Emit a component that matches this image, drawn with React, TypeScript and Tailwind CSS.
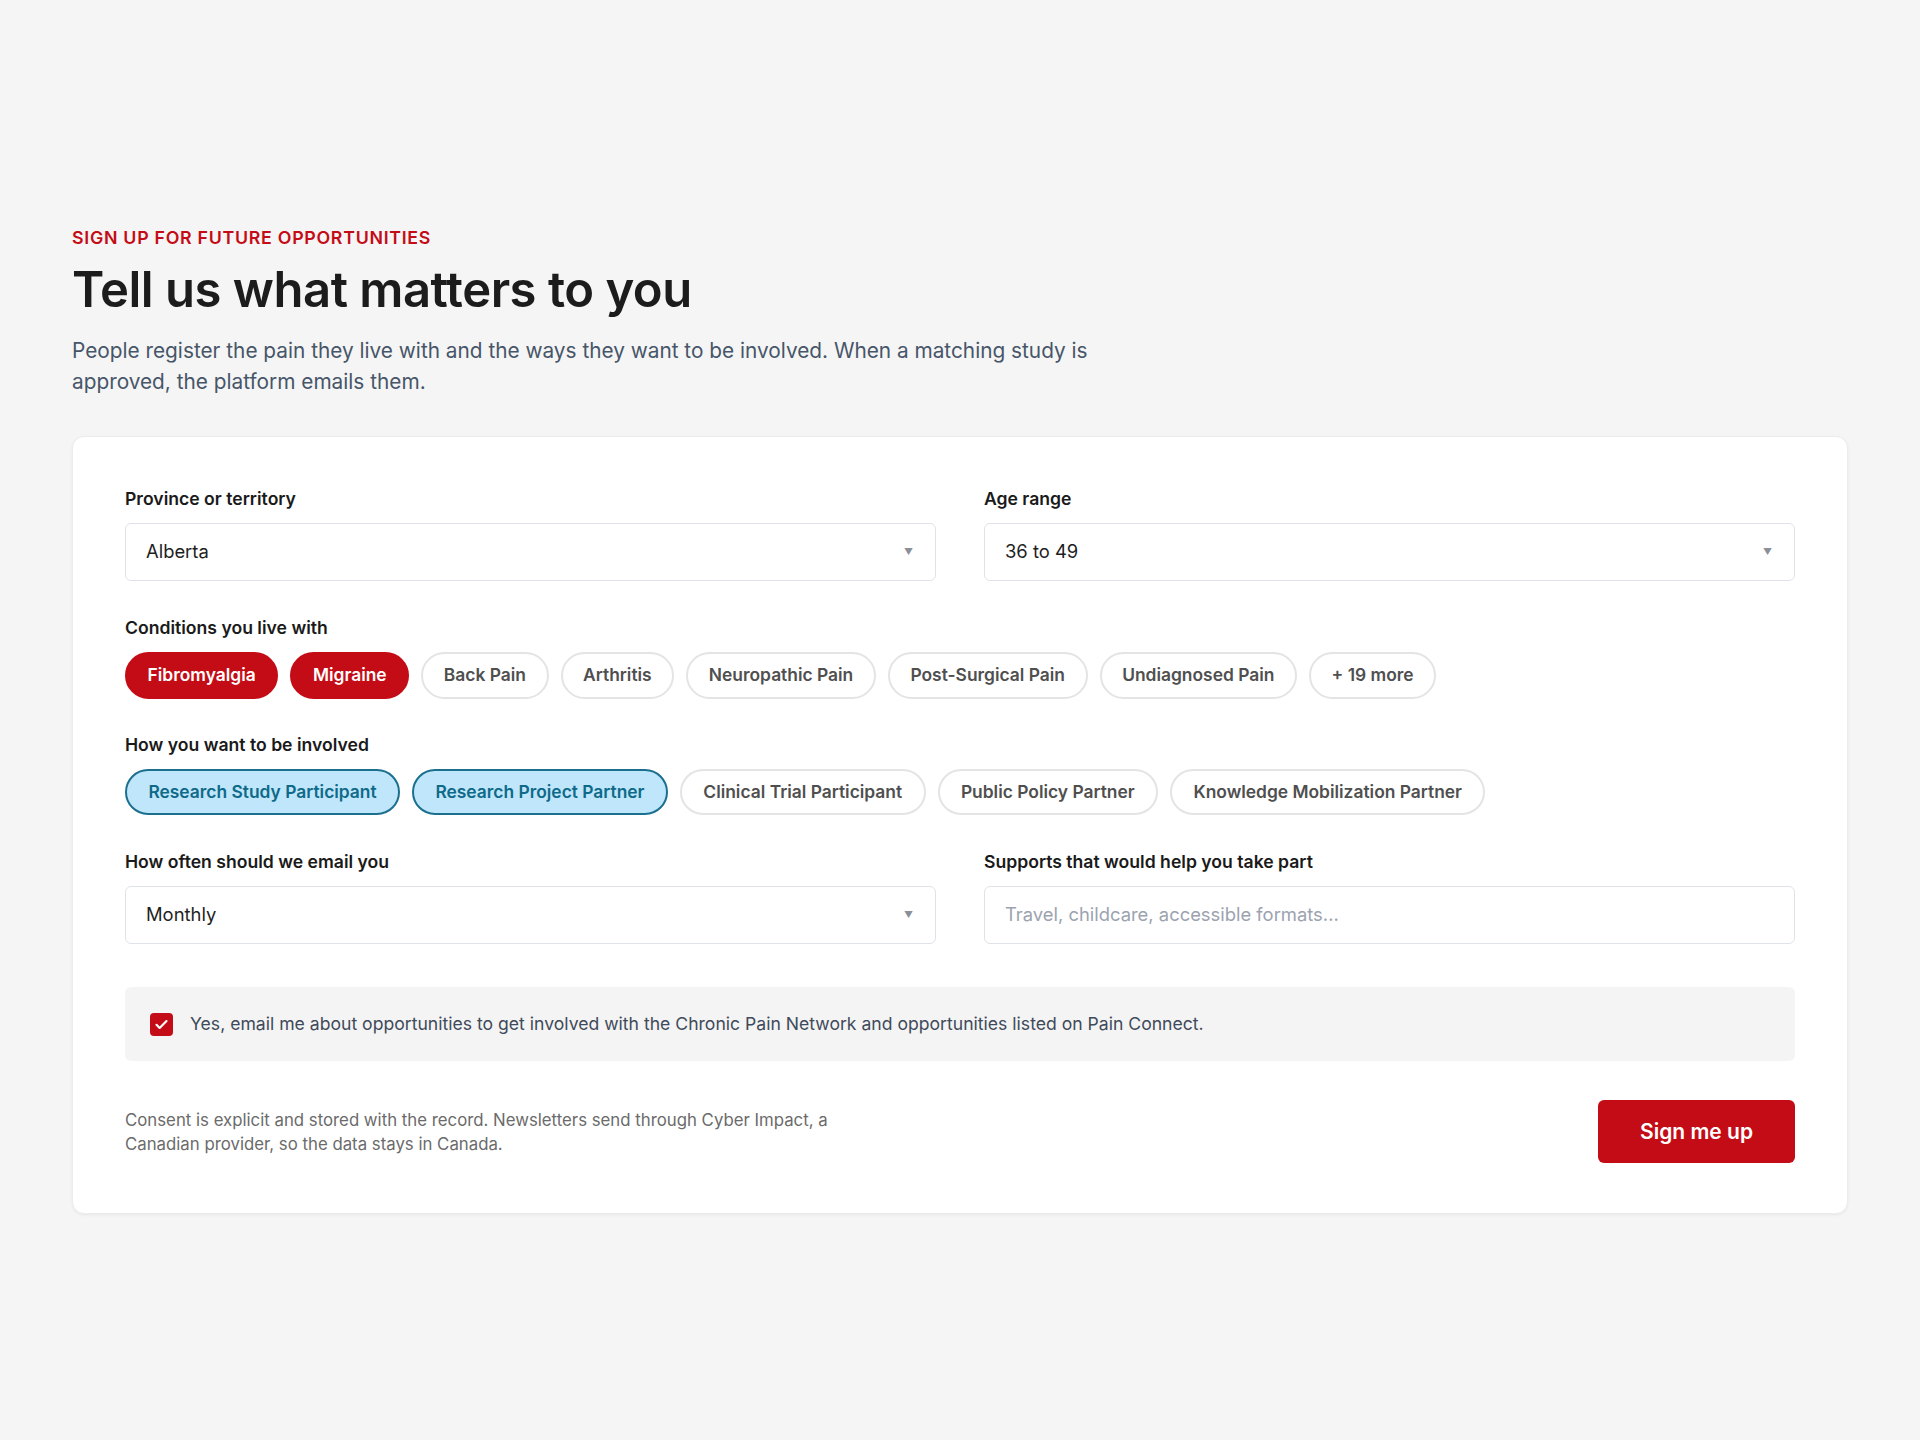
import React, { useState } from 'react';

const conditions = [
  'Fibromyalgia',
  'Migraine',
  'Back Pain',
  'Arthritis',
  'Neuropathic Pain',
  'Post-Surgical Pain',
  'Undiagnosed Pain',
  '+ 19 more',
];

const involvement = [
  'Research Study Participant',
  'Research Project Partner',
  'Clinical Trial Participant',
  'Public Policy Partner',
  'Knowledge Mobilization Partner',
];

const Label: React.FC<{ children: React.ReactNode }> = ({ children }) => (
  <div className="text-[17.6px] leading-6 font-semibold text-[#1a1a1a] mb-3">{children}</div>
);

const SelectBox: React.FC<{ value: string }> = ({ value }) => (
  <div className="h-[58px] w-full flex items-center justify-between rounded-md border border-[#dfe3e8] bg-white pl-5 pr-[22px]">
    <span className="text-[18.4px] text-[#1f1f1f]">{value}</span>
    <span className="text-[9px] text-[#8a8f98]">▼</span>
  </div>
);

const App: React.FC = () => {
  const [selectedConditions] = useState(['Fibromyalgia', 'Migraine']);
  const [selectedRoles] = useState(['Research Study Participant', 'Research Project Partner']);

  return (
    <div className="min-h-[1440px] bg-[#f5f5f5] px-[72px] pt-[226px]" style={{ fontFamily: 'Inter, "Noto Sans", sans-serif' }}>
      {/* Header */}
      <div className="text-[17.8px] leading-6 font-semibold tracking-[0.04em] text-[#c40c16]">
        SIGN UP FOR FUTURE OPPORTUNITIES
      </div>
      <h1 className="mt-[12px] text-[49px] leading-[56px] font-semibold tracking-[-0.01em] text-[#1c1c1c]">
        Tell us what matters to you
      </h1>
      <p className="mt-[17px] max-w-[1060px] text-[20.8px] leading-[31px] text-[#475569]">
        People register the pain they live with and the ways they want to be involved. When a matching study is
        approved, the platform emails them.
      </p>

      {/* Card */}
      <div className="mt-[39px] rounded-xl bg-white p-[52px] pt-[50px] pb-[50px] shadow-[0_1px_3px_rgba(0,0,0,0.06)] border border-[#ececec]">
        <div className="grid grid-cols-2 gap-x-12">
          <div>
            <Label>Province or territory</Label>
            <SelectBox value="Alberta" />
          </div>
          <div>
            <Label>Age range</Label>
            <SelectBox value="36 to 49" />
          </div>
        </div>

        <div className="mt-[35px]">
          <Label>Conditions you live with</Label>
          <div className="flex flex-wrap gap-3">
            {conditions.map((c) => {
              const on = selectedConditions.includes(c);
              return (
                <span
                  key={c}
                  className={
                    on
                      ? 'h-[47px] px-[20.6px] flex items-center rounded-full border-2 border-[#c40c16] bg-[#c40c16] text-[17.4px] font-semibold text-white'
                      : 'h-[47px] px-[20.6px] flex items-center rounded-full border-2 border-[#e4e4e4] bg-white text-[17.4px] font-semibold text-[#4f4f4f]'
                  }
                >
                  {c}
                </span>
              );
            })}
          </div>
        </div>

        <div className="mt-[34px]">
          <Label>How you want to be involved</Label>
          <div className="flex flex-wrap gap-3">
            {involvement.map((r) => {
              const on = selectedRoles.includes(r);
              return (
                <span
                  key={r}
                  className={
                    on
                      ? 'h-[46px] px-[21.4px] flex items-center rounded-full border-2 border-[#1b6f8f] bg-[#bfe6fb] text-[17.4px] font-semibold text-[#0e6a88]'
                      : 'h-[46px] px-[21.4px] flex items-center rounded-full border-2 border-[#e4e4e4] bg-white text-[17.4px] font-semibold text-[#4f4f4f]'
                  }
                >
                  {r}
                </span>
              );
            })}
          </div>
        </div>

        <div className="mt-[35px] grid grid-cols-2 gap-x-12">
          <div>
            <Label>How often should we email you</Label>
            <SelectBox value="Monthly" />
          </div>
          <div>
            <Label>Supports that would help you take part</Label>
            <div className="h-[58px] w-full flex items-center rounded-md border border-[#dfe3e8] bg-white px-5">
              <span className="text-[18.4px] text-[#9ca3af]">Travel, childcare, accessible formats...</span>
            </div>
          </div>
        </div>

        {/* Consent */}
        <div className="mt-[43px] h-[74px] flex items-center gap-[17px] rounded-md bg-[#f4f4f4] px-[25px]">
          <span className="h-[23px] w-[23px] flex items-center justify-center rounded-[4px] bg-[#c40c16]">
            <svg width="15" height="15" viewBox="0 0 24 24" fill="none" stroke="white" strokeWidth="3.5" strokeLinecap="round" strokeLinejoin="round">
              <path d="M4 12.5l5 5L20 6.5" />
            </svg>
          </span>
          <span className="text-[17.6px] text-[#3f4a5a]">
            Yes, email me about opportunities to get involved with the Chronic Pain Network and opportunities listed on Pain Connect.
          </span>
        </div>

        {/* Footer */}
        <div className="mt-[39px] flex items-center justify-between">
          <p className="max-w-[740px] text-[16.8px] leading-6 text-[#6b6b6b]">
            Consent is explicit and stored with the record. Newsletters send through Cyber Impact, a Canadian provider, so the data stays in Canada.
          </p>
          <button className="h-[63px] w-[197px] rounded-md bg-[#c40c16] text-[21px] font-semibold text-white">
            Sign me up
          </button>
        </div>
      </div>
    </div>
  );
};

export default App;
